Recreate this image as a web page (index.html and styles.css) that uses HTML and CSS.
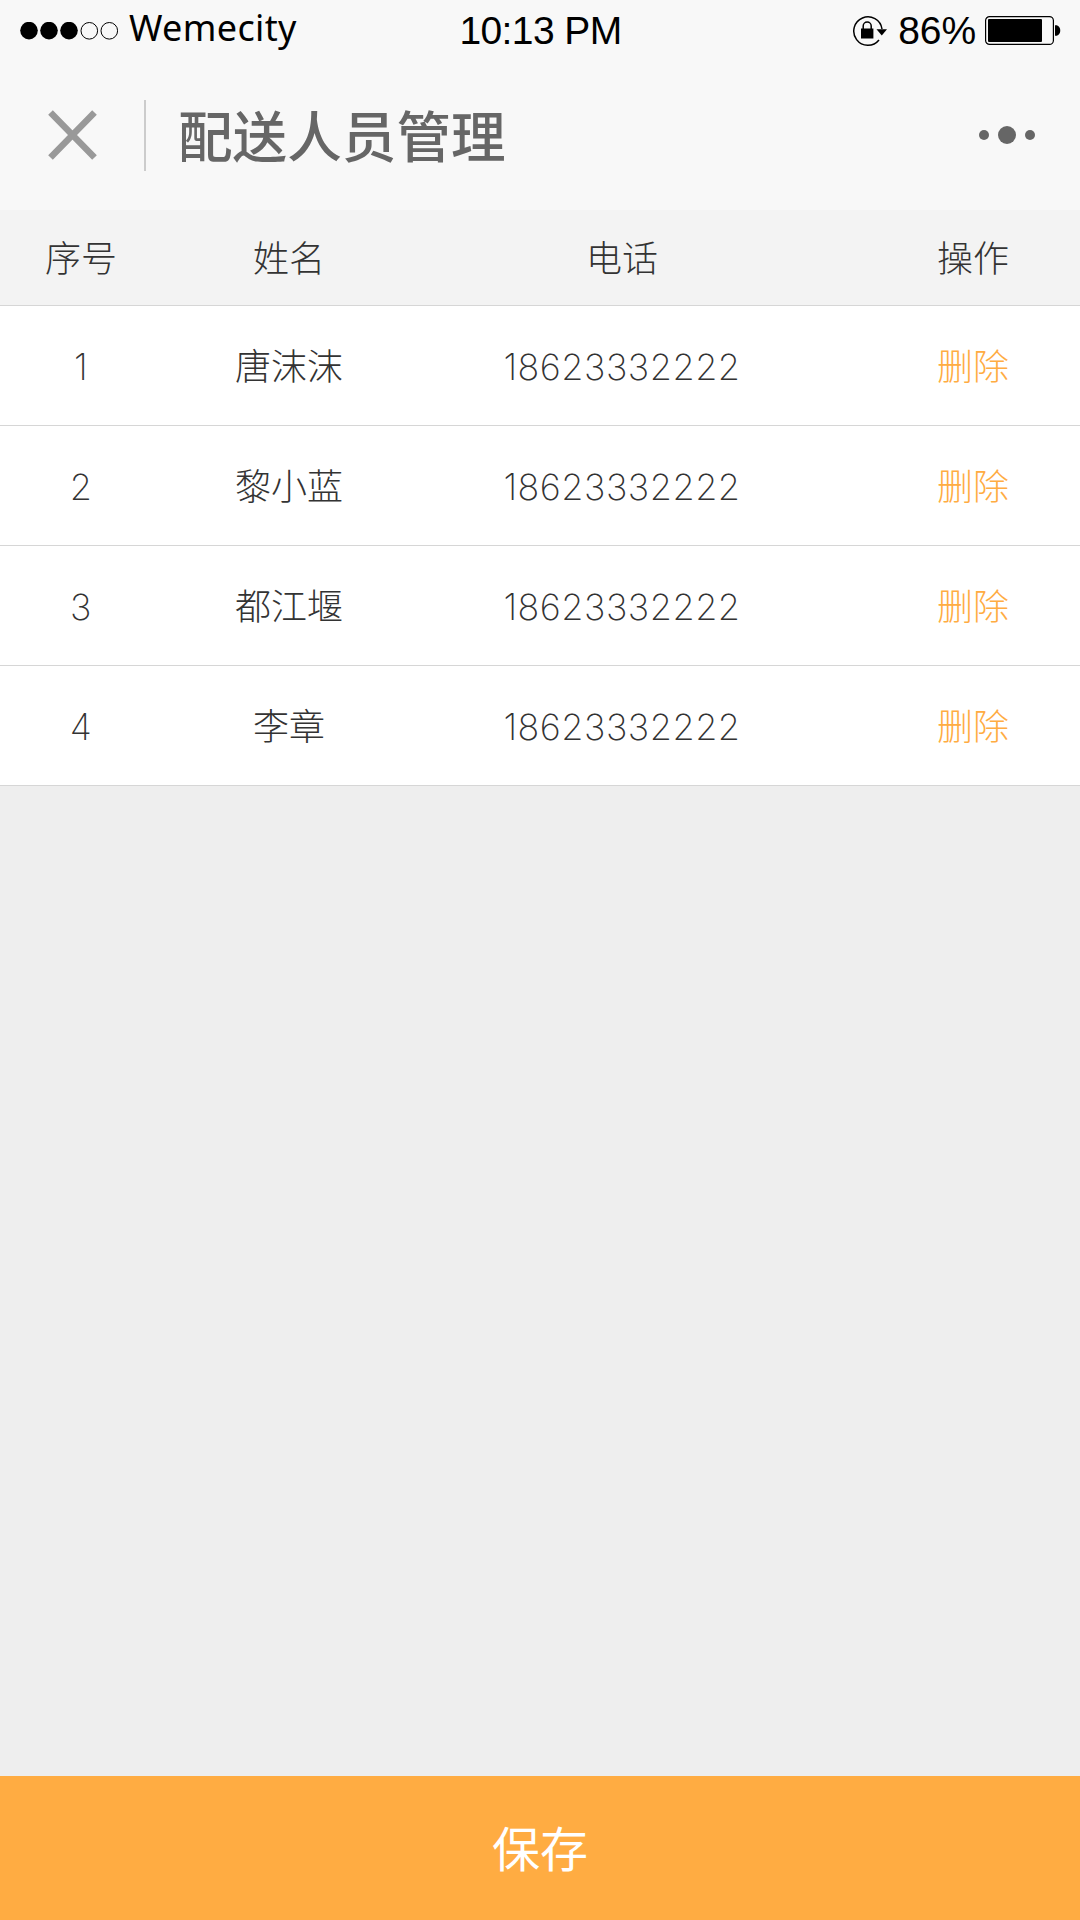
FILE: index.html
```html
<!DOCTYPE html>
<html lang="zh-CN">
<head>
<meta charset="UTF-8">
<title>配送人员管理</title>
<link rel="stylesheet" href="styles.css">
</head>
<body>
<div class="status">
  <div class="carrier">
    <svg width="98" height="18" viewBox="0 0 98 18"><circle cx="9" cy="8.6" r="8.8"/><circle cx="29" cy="8.6" r="8.8"/><circle cx="49" cy="8.6" r="8.8"/><g fill="none" stroke="#000"><circle cx="69.3" cy="8.8" r="8.3"/><circle cx="89.3" cy="8.8" r="8.3"/></g></svg>
    <span class="carrier-name">Wemecity</span>
  </div>
  <span class="time">10:13 PM</span>
  <div class="power">
    <svg width="36" height="32" viewBox="0 0 36 32"><path d="M30 14A14.2 14.2 0 1 0 27 25" fill="none" stroke="#000" stroke-width="1.5"/><path d="M24.5 14.2h10.5l-5.2 6.2z"/><path d="M9 13.5h12.4v10H9z"/><path d="M11.2 14v-3a4 4 0 0 1 8 0v3" fill="none" stroke="#000" stroke-width="1.5"/></svg>
    <span class="percent">86%</span>
    <svg width="76" height="30" viewBox="0 0 76 30"><rect x=".6" y=".6" width="67.8" height="27.8" rx="4" fill="none" stroke="#000" stroke-width="1.2"/><rect x="3" y="3" width="54" height="23" rx="1"/><path d="M70 9.3c7-1 7 11.4 0 10.4z"/></svg>
  </div>
</div>
<header class="nav">
  <svg width="50" height="50" viewBox="0 0 50 50"><path d="M2.5 2.5L46.5 47.5M46.5 2.5L2.5 47.5" stroke="#999" stroke-width="6.5"/></svg>
  <span class="divider"></span>
  <h1 class="title">配送人员管理</h1>
  <svg class="more" width="58" height="20" viewBox="0 0 58 20"><circle cx="6" cy="10" r="5"/><circle cx="29" cy="10" r="9"/><circle cx="52" cy="10" r="5"/></svg>
</header>
<main class="list">
  <div class="row head"><span>序号</span><span>姓名</span><span>电话</span><span class="action">操作</span></div>
  <div class="row"><span class="num">1</span><span>唐沫沫</span><span class="num">18623332222</span><span class="action delete">删除</span></div>
  <div class="row"><span class="num">2</span><span>黎小蓝</span><span class="num">18623332222</span><span class="action delete">删除</span></div>
  <div class="row"><span class="num">3</span><span>都江堰</span><span class="num">18623332222</span><span class="action delete">删除</span></div>
  <div class="row"><span class="num">4</span><span>李章</span><span class="num">18623332222</span><span class="action delete">删除</span></div>
</main>
<button class="save">保存</button>
</body>
</html>
```
FILE: styles.css
```css
* { box-sizing: border-box; }
body {
  margin: 0;
  height: 1920px;
  display: flex;
  flex-direction: column;
  background: #eee;
  color: #333;
  font-family: "Noto Sans CJK SC", sans-serif;
}
svg { display: block; flex: none; }
.status {
  height: 60px;
  padding: 0 19px 0 20px;
  display: grid;
  grid-template-columns: 1fr auto 1fr;
  align-items: center;
  background: #f8f8f8;
  color: #000;
  font: 39px/60px "Liberation Sans", sans-serif;
}
.carrier { display: flex; align-items: center; gap: 11px; }
.carrier-name {
  height: 60px;
  font: 36px/54px "Noto Sans", sans-serif;
  letter-spacing: 0.35px;
}
.time { padding-top: 1px; letter-spacing: -0.6px; }
.power { display: flex; align-items: center; justify-content: flex-end; }
.percent { margin: 1px 9px 0 10px; letter-spacing: -0.1px; }
.nav {
  height: 150px;
  padding: 0 44px 0 48px;
  display: flex;
  align-items: center;
  background: #f8f8f8;
}
.divider { width: 2px; height: 71px; margin: 0 32px 0 46px; background: #ccc; }
.title {
  margin: 0;
  padding-bottom: 3px;
  color: #666;
  font: 500 54.6px/80px "Noto Sans CJK SC", sans-serif;
}
.more { margin-left: auto; fill: #666; }
.list { flex: 1; }
.row {
  height: 120px;
  padding-bottom: 3px;
  display: grid;
  grid-template-columns: 162px 254px 412px 252px;
  align-items: center;
  text-align: center;
  background: #fff;
  border-bottom: 1px solid #d6d6d6;
  font-size: 36px;
  font-weight: 300;
}
.head { height: 96px; padding-bottom: 4px; background: #f3f3f3; }
.num {
  padding-top: 5px;
  font-family: Inter, sans-serif;
  font-weight: 250;
  letter-spacing: 0.5px;
}
.action { padding-left: 38px; }
.delete { color: #ffac42; }
.save {
  height: 144px;
  padding: 0 0 4px;
  border: 0;
  background: #ffac42;
  color: #fff;
  font: 400 48px/140px "Noto Sans CJK SC", sans-serif;
}
```
